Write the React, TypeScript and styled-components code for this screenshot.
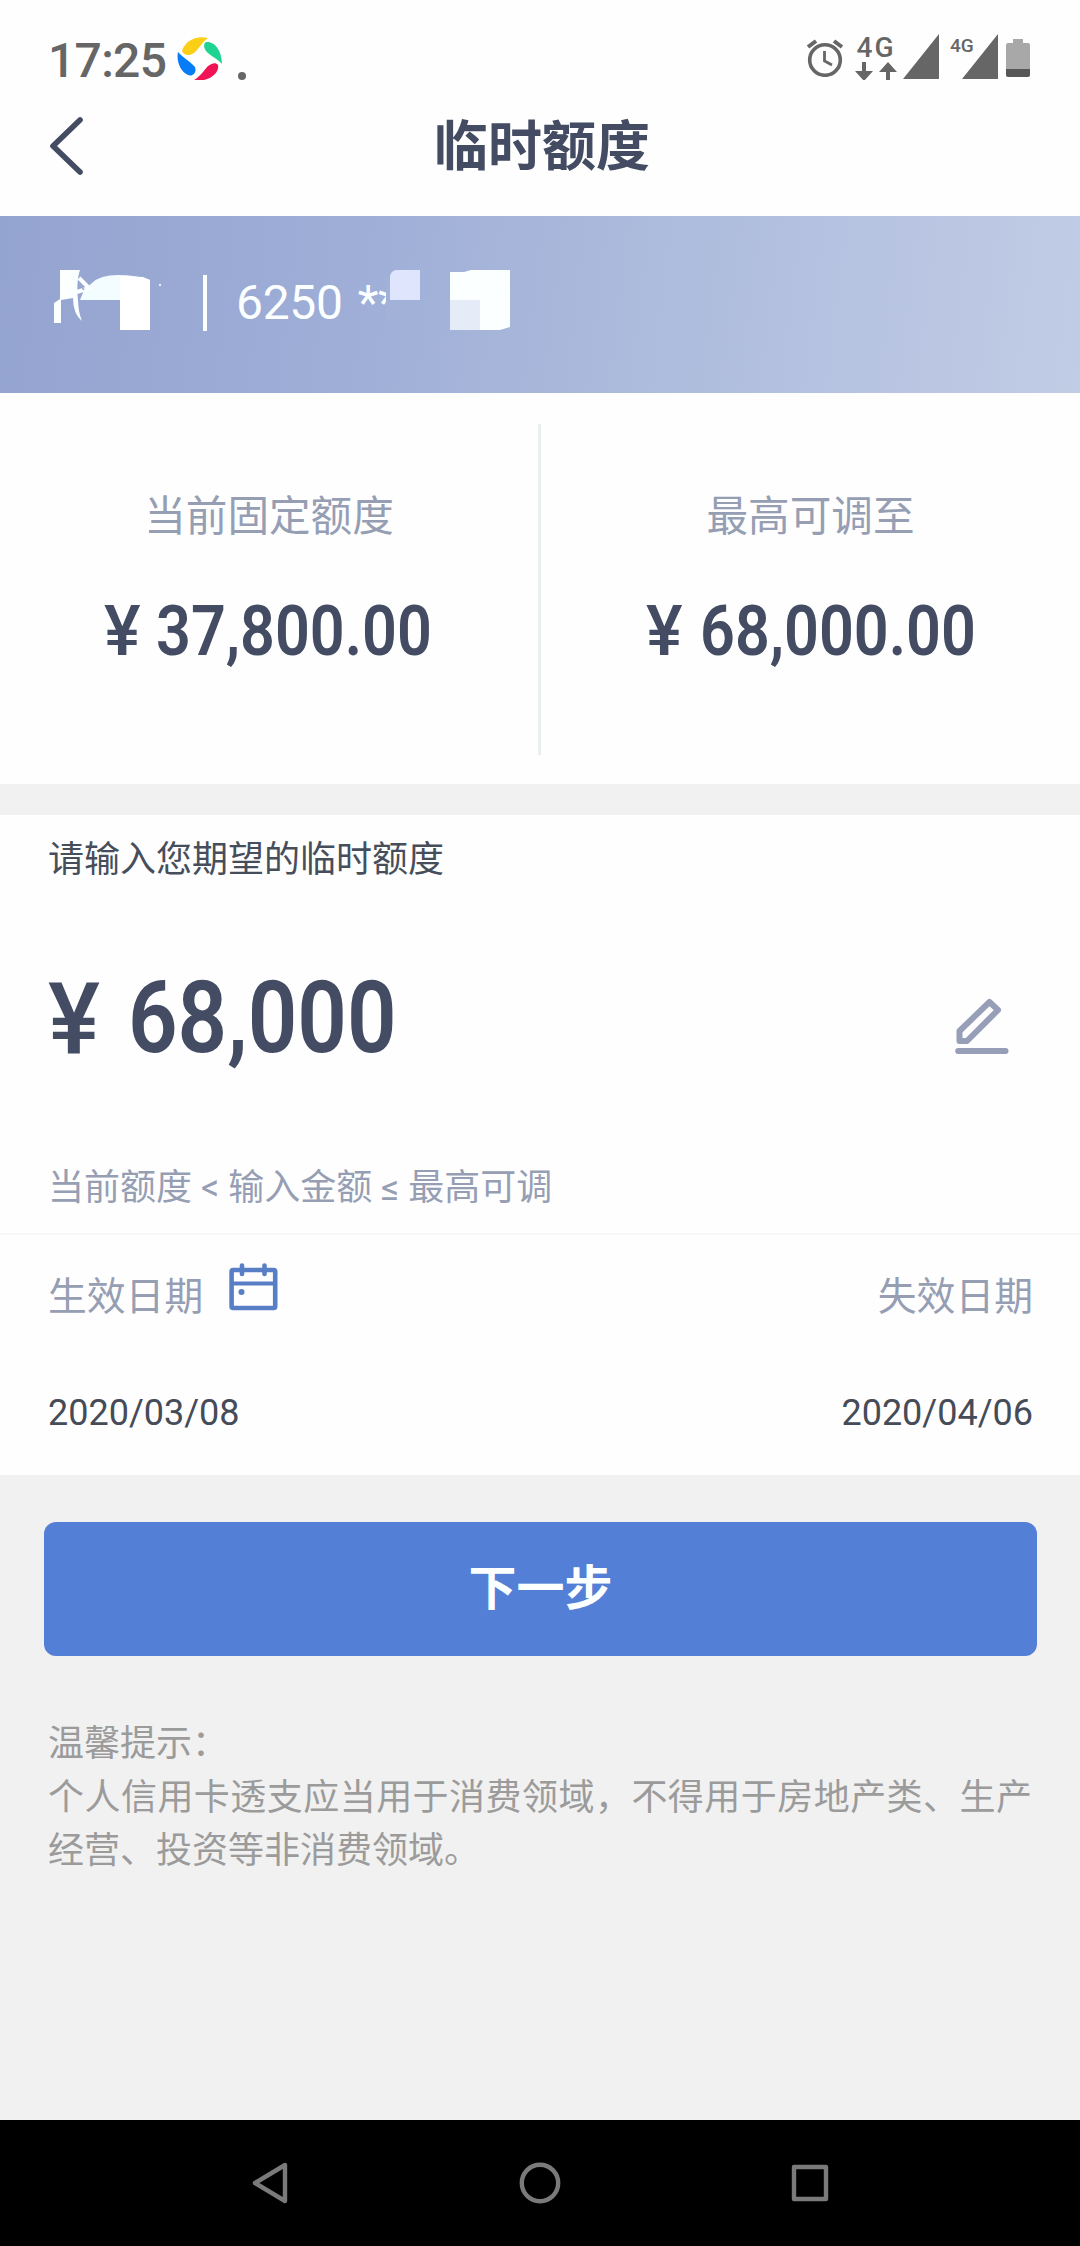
import React from 'react';
import styled, { createGlobalStyle } from 'styled-components';

const INK = '#434c63';
const MUTED = '#969eb4';
const STATUS = '#666666';

const GlobalStyle = createGlobalStyle`
  * { box-sizing: border-box; }
  body {
    margin: 0;
    background: #f1f1f1;
    font-family: Roboto, 'Noto Sans CJK SC', sans-serif;
  }
`;

const Screen = styled.div`
  display: flex;
  flex-direction: column;
  width: 1080px;
  height: 2246px;
  background: #f1f1f1;
  overflow: hidden;
`;

const StatusBar = styled.div`
  display: flex;
  justify-content: space-between;
  height: 80px;
  padding: 34px 50px 0 48px;
  background: #fefefe;
  color: ${STATUS};
`;

const StatusGroup = styled.div`
  display: flex;
  align-items: flex-start;
`;

const Clock = styled.span`
  width: 129px;
  margin-top: 2px;
  font-size: 48px;
  font-weight: 500;
  line-height: 50px;
  letter-spacing: -0.7px;
`;

const Dot = styled.span`
  width: 8px;
  height: 8px;
  margin: 38px 0 0 15px;
  border-radius: 50%;
  background: ${STATUS};
`;

const AlarmSlot = styled.div`
  display: flex;
  margin: 5px 9px 0 0;
`;

const Network = styled.div`
  display: flex;
  flex-direction: column;
  align-items: center;
  width: 46px;
  margin-right: 4px;
`;

const NetworkLabel = styled.span<{ $size: number; $height: number }>`
  font-size: ${(p) => p.$size}px;
  line-height: ${(p) => p.$height}px;
  font-weight: 500;
  letter-spacing: ${(p) => (p.$size > 22 ? 2 : 0)}px;
`;

const SecondSignal = styled.div`
  display: flex;
  margin: 0 8px 0 11px;
`;

const SecondLabel = styled.div`
  display: flex;
  width: 12px;
  white-space: nowrap;
`;

const BatterySlot = styled.div`
  display: flex;
  margin-top: 5px;
`;

const Header = styled.header`
  display: grid;
  grid-template-columns: 120px 1fr 120px;
  align-items: center;
  height: 136px;
  padding-bottom: 4px;
  background: #fefefe;
`;

const BackButton = styled.button`
  display: flex;
  padding: 0 0 0 47px;
  border: 0;
  background: none;
`;

const Title = styled.h1`
  margin: 0;
  padding: 3px 0 0 4px;
  color: ${INK};
  font-size: 54px;
  font-weight: 700;
  line-height: 64px;
  text-align: center;
`;

const CardBanner = styled.section`
  display: flex;
  align-items: flex-start;
  height: 177px;
  background: linear-gradient(97deg, #94a4d0 0%, #9dadd6 30%, #a9b7db 52%, #b3c0df 72%, #c1cce5 100%);
  color: #fbffff;
`;

const MaskedName = styled.div`
  width: 203px;
  padding: 54px 0 0 50px;
`;

const BannerRule = styled.div`
  width: 4px;
  height: 56px;
  margin-top: 59px;
  background: #fbffff;
`;

const CardNumber = styled.div`
  display: flex;
  gap: 15px;
  width: 150px;
  margin: 59px 0 0 29px;
  font-size: 48px;
  line-height: 56px;
  letter-spacing: -0.3px;
  white-space: nowrap;
`;

const MaskedDigits = styled.div`
  z-index: 1;
  padding-top: 54px;
`;

const Limits = styled.section`
  display: grid;
  grid-template-columns: 538px 3px 539px;
  height: 391px;
  background: #fefefe;
`;

const LimitRule = styled.div`
  height: 331px;
  margin-top: 31px;
  background: #e9eeef;
`;

const Limit = styled.div`
  display: flex;
  flex-direction: column;
  align-items: center;
  padding-top: 99px;
`;

const LimitLabel = styled.div`
  color: ${MUTED};
  font-size: 41.6px;
  line-height: 50px;
`;

const Amount = styled.div<{ $size: number; $gap: number }>`
  display: flex;
  align-items: baseline;
  gap: ${(p) => p.$gap}px;
  color: ${INK};
  font-size: ${(p) => p.$size}px;
  line-height: 1.2;
  white-space: nowrap;
`;

const Yen = styled.span<{ $width: number; $drop?: number }>`
  width: ${(p) => p.$width}px;
  font-weight: 500;
  line-height: 1;
  margin-bottom: ${(p) => -(p.$drop ?? 0)}px;

  & > span {
    display: inline-block;
    transform: translateY(${(p) => p.$drop ?? 0}px) scaleX(0.97);
    transform-origin: 0 50%;
  }
`;

const Figure = styled.span<{ $width: number }>`
  width: ${(p) => p.$width}px;
  font-weight: 600;

  & > span {
    display: inline-block;
    transform: scaleX(0.86);
    transform-origin: 0 50%;
  }
`;

const LimitAmount = styled.div`
  width: 330px;
  margin-top: 46px;
`;

const Entry = styled.section`
  display: flex;
  flex-direction: column;
  height: 420px;
  margin-top: 31px;
  padding: 24px 48px 0;
  border-bottom: 2px solid #f8f8f8;
  background: #fefefe;
`;

const Prompt = styled.div`
  color: #474e5b;
  font-size: 36px;
  line-height: 42px;
`;

const EntryRow = styled.div`
  display: flex;
  justify-content: space-between;
  align-items: flex-start;
  height: 124px;
  margin-top: 76px;
`;

const EditButton = styled.button`
  display: flex;
  margin: 41px 23px 0 0;
  padding: 0;
  border: 0;
  background: none;
`;

const Hint = styled.div`
  margin-top: 86px;
  color: ${MUTED};
  font-size: 36px;
  line-height: 42px;
`;

const Dates = styled.section`
  display: flex;
  justify-content: space-between;
  height: 240px;
  padding: 28px 47px 0 48px;
  background: #fefefe;
`;

const DateColumn = styled.div<{ $end?: boolean }>`
  display: flex;
  flex-direction: column;
  align-items: ${(p) => (p.$end ? 'flex-end' : 'flex-start')};
`;

const DateLabel = styled.div`
  display: flex;
  align-items: flex-start;
  gap: 26px;
  height: 60px;
  color: ${MUTED};
  font-size: 38.8px;
  line-height: 67px;
`;

const DateValue = styled.div`
  margin-top: 69px;
  color: #454b57;
  font-size: 36px;
  line-height: 42px;
`;

const NextButton = styled.button`
  height: 134px;
  margin: 47px 43px 0 44px;
  padding: 0;
  border: 0;
  border-radius: 12px;
  background: #537fd6;
  color: #fbffff;
  font-family: inherit;
  font-size: 48px;
  font-weight: 700;
  line-height: 56px;
`;

const Tips = styled.section`
  flex: 1;
  padding: 62px 48px 0;
  color: #9b9b9b;
  font-size: 36px;
  line-height: 53.5px;
`;

const TipText = styled.p`
  margin: 0;
  text-align: justify;
`;

const NavBar = styled.nav`
  display: grid;
  grid-template-columns: repeat(3, 270px);
  justify-content: center;
  align-items: center;
  justify-items: center;
  height: 126px;
  background: #000;
`;

const AssistantLogo = () => (
  <svg width="46" height="48" viewBox="0 -2 46 48">
    <path d="M5 15C8 5 19-1 31 2C25 6 22 13 17 17C13 20 7 20 5 15Z" fill="#fbcf15" />
    <path d="M29 6C38 5 45 15 45 28C40 22 33 20 29 15C27 12 26 8 29 6Z" fill="#1fd493" />
    <path d="M41 29C43 37 31 47 17 44C23 41 27 34 31 30C35 27 39 26 41 29Z" fill="#f01457" />
    <path d="M1 16C6 22 13 25 18 31C20 36 16 41 11 39C4 36-1 26 1 16Z" fill="#087cf7" />
  </svg>
);

const AlarmIcon = () => (
  <svg width="38" height="38" viewBox="0 0 38 38" fill="none" stroke={STATUS}>
    <circle cx="19" cy="21" r="15.3" strokeWidth="3.6" />
    <path d="M18.5 12V22L26 26" strokeWidth="2.8" />
    <path d="M2 8L10 2M36 8L28 2" strokeWidth="4" />
  </svg>
);

const DataArrows = () => (
  <svg width="46" height="19" viewBox="0 0 46 19" fill={STATUS}>
    <path d="M9 0H13V9H20L11 19L2 9H9Z" />
    <path d="M33 19H37V10H44L35 0L26 10H33Z" />
  </svg>
);

const SignalIcon = () => (
  <svg width="36" height="45" viewBox="0 0 36 45">
    <path d="M36 0V45H0Z" fill={STATUS} />
  </svg>
);

const BatteryIcon = () => (
  <svg width="24" height="38" viewBox="0 0 24 38">
    <path d="M7 0H17V4H22Q24 4 24 6V30H0V6Q0 4 2 4H7Z" fill="#a8a8a8" />
    <path d="M0 30H24V36Q24 38 22 38H2Q0 38 0 36Z" fill="#575757" />
  </svg>
);

const BackIcon = () => (
  <svg width="40" height="60" viewBox="0 0 40 60" fill="none" stroke={INK} strokeWidth="5.6" strokeLinecap="round" strokeLinejoin="round">
    <path d="M33 4L6 30L33 56" />
  </svg>
);

const NameMask = () => (
  <svg width="114" height="62" viewBox="50 270 114 62">
    <path d="M80 300L84 290L92 283Q100 275 118 275Q136 275 150 280V300Z" fill="#f3fcff" />
    <path d="M120 276L143 277L150 280V330H120Z" fill="#ffffff" />
    <path d="M60 270H80C77 278 77 290 78 300Q78 311 82 321Q73 314 73 298L61 300V323H54V303L60 299Z" fill="#fcffff" />
    <path d="M79 278L89 288L77 292" fill="none" stroke="#fbffff" strokeWidth="4" />
    <path d="M79 283L84 290" stroke="#9aaad3" strokeWidth="1.6" />
    <circle cx="160" cy="285" r="1.2" fill="#e7edfa" />
  </svg>
);

const DigitsMask = () => (
  <svg width="124" height="61" viewBox="-4 0 124 61">
    <path d="M-4 8H12V50H-4Z" fill="#a2b1d8" />
    <path d="M6 0H30V30H0V6Q1 1 6 0Z" fill="#dfe5fc" />
    <path d="M60 2H74L81 0H120V57L110 60H60Z" fill="#fcffff" />
    <path d="M60 30H90V60H60Z" fill="#e5ebf7" />
  </svg>
);

const PencilIcon = () => (
  <svg width="54" height="58" viewBox="0 0 54 58" fill="none" stroke="#969eb8" strokeLinejoin="round">
    <path d="M4.5 43V33L34.5 4L43 12L12 43Z" strokeWidth="6" />
    <path d="M3.2 53H50.5" strokeWidth="6" strokeLinecap="round" />
  </svg>
);

const CalendarIcon = () => (
  <svg width="49" height="48" viewBox="0 0 49 48" fill="none" stroke="#587fc6" strokeWidth="4.6" strokeLinecap="round">
    <rect x="2.6" y="7" width="43.6" height="38" rx="1.5" />
    <path d="M3 20.5H46" strokeWidth="4" />
    <path d="M13 2.5V11M35.5 2.5V11" />
    <circle cx="12.5" cy="29" r="3" fill="#587fc6" stroke="none" />
  </svg>
);

const navStroke = { fill: 'none', stroke: '#7a7a7a', strokeWidth: 4.4, strokeLinejoin: 'round' as const };

const limits = [
  { label: '当前固定额度', value: '37,800.00', gap: 14 },
  { label: '最高可调至', value: '68,000.00', gap: 16 },
];

const LimitCell = ({ label, value, gap }: { label: string; value: string; gap: number }) => (
  <Limit>
    <LimitLabel>{label}</LimitLabel>
    <LimitAmount>
      <Amount $size={71} $gap={gap}>
        <Yen $width={38}><span>¥</span></Yen>
        <Figure $width={276}><span>{value}</span></Figure>
      </Amount>
    </LimitAmount>
  </Limit>
);

export default function App() {
  return (
    <>
      <GlobalStyle />
      <Screen lang="zh-CN">
        <StatusBar>
          <StatusGroup>
            <Clock>17:25</Clock>
            <AssistantLogo />
            <Dot />
          </StatusGroup>
          <StatusGroup>
            <AlarmSlot><AlarmIcon /></AlarmSlot>
            <Network>
              <NetworkLabel $size={28} $height={28}>4G</NetworkLabel>
              <DataArrows />
            </Network>
            <SignalIcon />
            <SecondSignal>
              <SecondLabel>
                <NetworkLabel $size={19} $height={23}>4G</NetworkLabel>
              </SecondLabel>
              <SignalIcon />
            </SecondSignal>
            <BatterySlot><BatteryIcon /></BatterySlot>
          </StatusGroup>
        </StatusBar>

        <Header>
          <BackButton aria-label="返回"><BackIcon /></BackButton>
          <Title>临时额度</Title>
        </Header>

        <CardBanner>
          <MaskedName><NameMask /></MaskedName>
          <BannerRule />
          <CardNumber>
            <span>6250</span>
            <span>**</span>
          </CardNumber>
          <MaskedDigits><DigitsMask /></MaskedDigits>
        </CardBanner>

        <Limits>
          <LimitCell {...limits[0]} />
          <LimitRule />
          <LimitCell {...limits[1]} />
        </Limits>

        <Entry>
          <Prompt>请输入您期望的临时额度</Prompt>
          <EntryRow>
            <Amount $size={101} $gap={26}>
              <Yen $width={54} $drop={2}><span>¥</span></Yen>
              <Figure $width={264}><span>68,000</span></Figure>
            </Amount>
            <EditButton aria-label="编辑"><PencilIcon /></EditButton>
          </EntryRow>
          <Hint>当前额度 &lt; 输入金额 ≤ 最高可调</Hint>
        </Entry>

        <Dates>
          <DateColumn>
            <DateLabel>生效日期<CalendarIcon /></DateLabel>
            <DateValue>2020/03/08</DateValue>
          </DateColumn>
          <DateColumn $end>
            <DateLabel>失效日期</DateLabel>
            <DateValue>2020/04/06</DateValue>
          </DateColumn>
        </Dates>

        <NextButton>下一步</NextButton>

        <Tips>
          <TipText>温馨提示：</TipText>
          <TipText>个人信用卡透支应当用于消费领域，不得用于房地产类、生产经营、投资等非消费领域。</TipText>
        </Tips>

        <NavBar>
          <svg width="40" height="44" viewBox="0 0 40 44" {...navStroke}>
            <path d="M35 4V40L5 22Z" />
          </svg>
          <svg width="44" height="44" viewBox="0 0 44 44" {...navStroke}>
            <circle cx="22" cy="22" r="18.2" />
          </svg>
          <svg width="40" height="40" viewBox="0 0 40 40" {...navStroke}>
            <rect x="4" y="4" width="32" height="32" />
          </svg>
        </NavBar>
      </Screen>
    </>
  );
}
